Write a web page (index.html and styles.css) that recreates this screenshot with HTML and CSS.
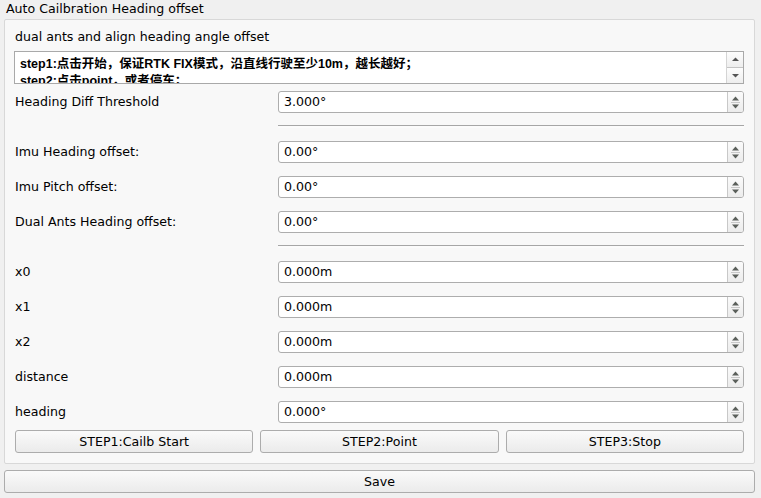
FILE: index.html
```html
<!DOCTYPE html>
<html>
<head>
<meta charset="utf-8">
<link rel="stylesheet" href="styles.css">
</head>
<body>
<div class="window">
  <div class="title">Auto Cailbration Heading offset</div>
  <div class="group">
    <div class="caption">dual ants and align heading angle offset</div>
    <div class="textarea">
      <div class="text">
        <div class="line">step1:点击开始，保证RTK FIX模式，沿直线行驶至少10m，越长越好；</div>
        <div class="line">step2:点击point，或者停车；</div>
      </div>
      <div class="vscroll">
        <div class="sbtn"><svg width="15" height="15" viewBox="0 0 15 15"><polygon points="4,9 11,9 7.5,5.5" fill="#555"/></svg></div>
        <div class="sbtn"><svg width="15" height="15" viewBox="0 0 15 15"><polygon points="4,6 11,6 7.5,9.5" fill="#555"/></svg></div>
      </div>
    </div>
    <div class="form">
      <div class="label">Heading Diff Threshold</div>
      <div class="spin"><span class="val">3.000°</span><span class="arrows"><svg width="15" height="20" viewBox="0 0 15 20"><polygon points="4,8.5 11,8.5 7.5,4.5" fill="#5a5f5a"/><line x1="3" y1="10.5" x2="12" y2="10.5" stroke="#c8c8c8"/><polygon points="4,12.5 11,12.5 7.5,16.5" fill="#5a5f5a"/></svg></span></div>
      <div></div><div class="sep"></div>
      <div class="label">Imu Heading offset:</div>
      <div class="spin"><span class="val">0.00°</span><span class="arrows"><svg width="15" height="20" viewBox="0 0 15 20"><polygon points="4,8.5 11,8.5 7.5,4.5" fill="#5a5f5a"/><line x1="3" y1="10.5" x2="12" y2="10.5" stroke="#c8c8c8"/><polygon points="4,12.5 11,12.5 7.5,16.5" fill="#5a5f5a"/></svg></span></div>
      <div class="label">Imu Pitch offset:</div>
      <div class="spin"><span class="val">0.00°</span><span class="arrows"><svg width="15" height="20" viewBox="0 0 15 20"><polygon points="4,8.5 11,8.5 7.5,4.5" fill="#5a5f5a"/><line x1="3" y1="10.5" x2="12" y2="10.5" stroke="#c8c8c8"/><polygon points="4,12.5 11,12.5 7.5,16.5" fill="#5a5f5a"/></svg></span></div>
      <div class="label">Dual Ants Heading offset:</div>
      <div class="spin"><span class="val">0.00°</span><span class="arrows"><svg width="15" height="20" viewBox="0 0 15 20"><polygon points="4,8.5 11,8.5 7.5,4.5" fill="#5a5f5a"/><line x1="3" y1="10.5" x2="12" y2="10.5" stroke="#c8c8c8"/><polygon points="4,12.5 11,12.5 7.5,16.5" fill="#5a5f5a"/></svg></span></div>
      <div></div><div class="sep"></div>
      <div class="label">x0</div>
      <div class="spin"><span class="val">0.000m</span><span class="arrows"><svg width="15" height="20" viewBox="0 0 15 20"><polygon points="4,8.5 11,8.5 7.5,4.5" fill="#5a5f5a"/><line x1="3" y1="10.5" x2="12" y2="10.5" stroke="#c8c8c8"/><polygon points="4,12.5 11,12.5 7.5,16.5" fill="#5a5f5a"/></svg></span></div>
      <div class="label">x1</div>
      <div class="spin"><span class="val">0.000m</span><span class="arrows"><svg width="15" height="20" viewBox="0 0 15 20"><polygon points="4,8.5 11,8.5 7.5,4.5" fill="#5a5f5a"/><line x1="3" y1="10.5" x2="12" y2="10.5" stroke="#c8c8c8"/><polygon points="4,12.5 11,12.5 7.5,16.5" fill="#5a5f5a"/></svg></span></div>
      <div class="label">x2</div>
      <div class="spin"><span class="val">0.000m</span><span class="arrows"><svg width="15" height="20" viewBox="0 0 15 20"><polygon points="4,8.5 11,8.5 7.5,4.5" fill="#5a5f5a"/><line x1="3" y1="10.5" x2="12" y2="10.5" stroke="#c8c8c8"/><polygon points="4,12.5 11,12.5 7.5,16.5" fill="#5a5f5a"/></svg></span></div>
      <div class="label">distance</div>
      <div class="spin"><span class="val">0.000m</span><span class="arrows"><svg width="15" height="20" viewBox="0 0 15 20"><polygon points="4,8.5 11,8.5 7.5,4.5" fill="#5a5f5a"/><line x1="3" y1="10.5" x2="12" y2="10.5" stroke="#c8c8c8"/><polygon points="4,12.5 11,12.5 7.5,16.5" fill="#5a5f5a"/></svg></span></div>
      <div class="label">heading</div>
      <div class="spin"><span class="val">0.000°</span><span class="arrows"><svg width="15" height="20" viewBox="0 0 15 20"><polygon points="4,8.5 11,8.5 7.5,4.5" fill="#5a5f5a"/><line x1="3" y1="10.5" x2="12" y2="10.5" stroke="#c8c8c8"/><polygon points="4,12.5 11,12.5 7.5,16.5" fill="#5a5f5a"/></svg></span></div>
    </div>
    <div class="buttons">
      <div class="btn">STEP1:Cailb Start</div>
      <div class="btn">STEP2:Point</div>
      <div class="btn">STEP3:Stop</div>
    </div>
  </div>
  <div class="btn save">Save</div>
</div>
</body>
</html>
```
FILE: styles.css
```css
html, body {
  margin: 0;
  padding: 0;
  background: #f0f0f0;
}
body {
  width: 761px;
  height: 498px;
  overflow: hidden;
  font-family: "DejaVu Sans", sans-serif;
  font-size: 12.6px;
  color: #000;
}
.window {
  display: flex;
  flex-direction: column;
  padding: 1px 6px 0 4px;
}
.title {
  padding-left: 2px;
  height: 18px;
  line-height: 16px;
}
.group {
  background: #f8f8f8;
  border: 1px solid #d8d8d8;
  border-radius: 2px;
  display: flex;
  flex-direction: column;
  gap: 7px;
  padding: 10px 10px 10px 9px;
}
.caption {
  height: 14px;
  line-height: 14px;
  padding-left: 1px;
}
.textarea {
  height: 31px;
  border: 1px solid #a9a9a9;
  background: #fff;
  display: flex;
}
.text {
  flex: 1;
  overflow: hidden;
  padding: 4px 5px 0 5px;
  font-family: "Liberation Sans", "Noto Sans CJK SC", sans-serif;
  font-weight: bold;
  font-size: 12.5px;
}
.line {
  height: 17px;
  line-height: 17px;
  white-space: nowrap;
}
.vscroll {
  width: 16px;
  border-left: 1px solid #d4d4d4;
  display: flex;
  flex-direction: column;
  background: #f4f4f4;
}
.sbtn {
  flex: 1;
  display: flex;
  align-items: center;
  justify-content: center;
  background: linear-gradient(#fdfdfd, #eeeeee);
}
.sbtn + .sbtn {
  border-top: 1px solid #c4c4c4;
}
.form {
  display: grid;
  grid-template-columns: 264px 1fr;
  grid-auto-rows: auto;
  row-gap: 13px;
}
.label {
  display: flex;
  align-items: center;
  padding-left: 1px;
  height: 21px;
}
.spin {
  height: 20px;
  border: 1px solid #adadad;
  border-radius: 3px;
  background: #fff;
  display: flex;
  align-items: stretch;
}
.val {
  flex: 1;
  padding-left: 5px;
  line-height: 20px;
}
.arrows {
  width: 15px;
  border-left: 1px solid #c8c8c8;
  background: linear-gradient(#fbfbfb, #ececec);
  border-radius: 0 2px 2px 0;
  display: flex;
}
.sep {
  margin-top: -1px;
  border-top: 1px solid #a6a6a6;
  background: #fbfbfb;
  height: 2px;
}
.buttons {
  display: grid;
  grid-template-columns: 1fr 1fr 1fr;
  column-gap: 7px;
  padding-left: 1px;
}
.btn {
  height: 21px;
  line-height: 21px;
  text-align: center;
  border: 1px solid #acacac;
  border-radius: 3px;
  background: linear-gradient(#fafafa, #ebebeb);
}
.save {
  margin-top: 6px;
}
```
